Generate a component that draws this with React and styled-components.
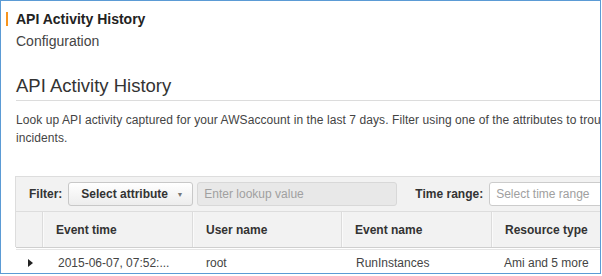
import React from "react";
import styled, { createGlobalStyle } from "styled-components";

const Global = createGlobalStyle`
  html, body { margin: 0; padding: 0; background: #fff; }
  body { font-family: "Liberation Sans", Arial, sans-serif; }
`;

const Frame = styled.div`
  width: 601px;
  height: 274px;
  box-sizing: border-box;
  border: 1px solid #5b9bd5;
  overflow: hidden;
  background: #fff;
`;

const Page = styled.div`
  width: 900px;
  padding-top: 11px;
`;

const Crumb = styled.div`
  margin-left: 5px;
  padding-left: 8px;
  border-left: 2px solid #f7941d;
  font-size: 14px;
  line-height: 14px;
  font-weight: bold;
  color: #222;
`;

const SubCrumb = styled.div`
  margin-top: 7px;
  padding-left: 15px;
  font-size: 14px;
  line-height: 16px;
  color: #444;
`;

const Heading = styled.h1`
  margin: 25px 0 0 15px;
  padding-bottom: 3px;
  border-bottom: 1px solid #dcdcdc;
  font-size: 18.5px;
  line-height: 23px;
  font-weight: normal;
  color: #333;
`;

const Intro = styled.p`
  margin: 10px 0 0 15px;
  font-size: 12px;
  line-height: 18px;
  letter-spacing: 0.08px;
  color: #444;
  white-space: nowrap;
`;

const Panel = styled.div`
  margin: 29px 0 0 14px;
  border: 1px solid #dddddd;
  border-bottom: none;
  background: #f2f2f2;
`;

const FilterBar = styled.div`
  display: flex;
  align-items: center;
  height: 34px;
  padding-left: 13px;
  border-bottom: 1px solid #dddddd;
  font-size: 12px;
`;

const Label = styled.span`
  font-weight: bold;
  color: #333;
  margin-right: ${(p) => p.$gap}px;
  margin-left: ${(p) => p.$lead || 0}px;
`;

const SelectButton = styled.div`
  box-sizing: border-box;
  width: 125px;
  height: 24px;
  display: flex;
  align-items: center;
  justify-content: space-between;
  padding: 0 9px 0 12px;
  border: 1px solid #c8c8c8;
  border-radius: 3px;
  background: linear-gradient(#ffffff, #ededed);
  font-weight: bold;
  color: #333;
`;

const Caret = styled.span`
  font-size: 7px;
  color: #777;
`;

const Field = styled.div`
  box-sizing: border-box;
  width: ${(p) => p.$w}px;
  height: 24px;
  margin-left: ${(p) => p.$ml || 0}px;
  display: flex;
  align-items: center;
  padding-left: 6px;
  border: 1px solid ${(p) => (p.$disabled ? "#d8d8d8" : "#cccccc")};
  border-radius: 3px;
  background: ${(p) => (p.$disabled ? "#e8e8e8" : "#ffffff")};
  color: #a0a0a0;
`;

const Grid = styled.div`
  display: grid;
  grid-template-columns: 26px 150px 149px 150px 200px 1fr;
  font-size: 12px;
`;

const HeadCell = styled.div`
  height: 35px;
  display: flex;
  align-items: center;
  padding-left: 13px;
  font-weight: bold;
  color: #333;
  border-left: ${(p) => (p.$first ? "none" : "1px solid #dcdcdc")};
  box-shadow: ${(p) => (p.$first ? "none" : "inset 1px 0 #fafafa")};
`;

const HeadRule = styled.div`
  margin-left: 15px;
  border-top: 1px solid #cfcfcf;
  border-bottom: 1px solid #e6e6e6;
  height: 1px;
  background: #fff;
`;

const BodyCell = styled.div`
  height: 25px;
  display: flex;
  align-items: center;
  padding-left: ${(p) => p.$pl}px;
  color: #444;
  white-space: nowrap;
`;

const RowGrid = styled(Grid)`
  margin-left: 15px;
`;

const Expander = styled.span`
  width: 0;
  height: 0;
  border-top: 4.5px solid transparent;
  border-bottom: 4.5px solid transparent;
  border-left: 5px solid #222;
  margin-left: 12px;
`;

export default function App() {
  const headers = ["Event time", "User name", "Event name", "Resource type", ""];
  return (
    <>
      <Global />
      <Frame>
        <Page>
          <Crumb>API Activity History</Crumb>
          <SubCrumb>Configuration</SubCrumb>
          <Heading>API Activity History</Heading>
          <Intro>
            Look up API activity captured for your AWSaccount in the last 7 days. Filter using one of the attributes to troubleshoot operational and security
            <br />
            incidents.
          </Intro>
          <Panel>
            <FilterBar>
              <Label $gap={6}>Filter:</Label>
              <SelectButton>
                Select attribute <Caret>▼</Caret>
              </SelectButton>
              <Field $w={200} $ml={4} $disabled>
                Enter lookup value
              </Field>
              <Label $gap={6} $lead={18}>Time range:</Label>
              <Field $w={160}>Select time range</Field>
            </FilterBar>
            <Grid>
              <HeadCell $first />
              {headers.map((h, i) => (
                <HeadCell key={i}>{h}</HeadCell>
              ))}
            </Grid>
          </Panel>
          <HeadRule />
          <RowGrid>
            <BodyCell $pl={0}>
              <Expander />
            </BodyCell>
            <BodyCell $pl={16}>2015-06-07, 07:52:...</BodyCell>
            <BodyCell $pl={14}>root</BodyCell>
            <BodyCell $pl={15}>RunInstances</BodyCell>
            <BodyCell $pl={13}>Ami and 5 more</BodyCell>
            <BodyCell $pl={13} />
          </RowGrid>
        </Page>
      </Frame>
    </>
  );
}
